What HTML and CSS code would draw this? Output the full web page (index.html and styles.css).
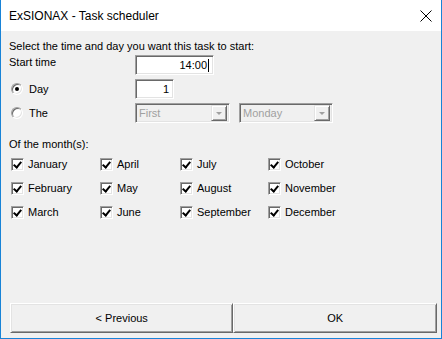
FILE: index.html
```html
<!DOCTYPE html>
<html lang="en">
  <head>
    <meta charset="UTF-8" />
    <title>ExSIONAX - Task scheduler</title>
    <link rel="stylesheet" href="styles.css">
  </head>
  <body>
    <div class="window">
      <div class="titlebar">
        <span class="title">ExSIONAX - Task scheduler</span>
        <svg class="close" width="12" height="12" viewBox="0 0 12 12">
          <path d="M0.5 0.5 L11.5 11.5 M11.5 0.5 L0.5 11.5" stroke="#000" stroke-width="1" fill="none" />
        </svg>
      </div>
      <div class="content">
        <p class="intro">Select the time and day you want this task to start:</p>
        <div class="row start">
          <span class="label">Start time</span>
          <div class="textbox time">14:00<span class="caret"></span></div>
        </div>
        <div class="row">
          <label class="radio-label"><span class="radio checked"></span>Day</label>
          <div class="textbox day">1</div>
        </div>
        <div class="row">
          <label class="radio-label"><span class="radio"></span>The</label>
          <div class="combo first"><span class="combo-text">First</span><span class="drop"></span></div>
          <div class="combo weekday"><span class="combo-text">Monday</span><span class="drop"></span></div>
        </div>
        <p class="months-title">Of the month(s):</p>
        <div class="months">
          <label class="check"><span class="box"></span>January</label>
          <label class="check"><span class="box"></span>April</label>
          <label class="check"><span class="box"></span>July</label>
          <label class="check"><span class="box"></span>October</label>
          <label class="check"><span class="box"></span>February</label>
          <label class="check"><span class="box"></span>May</label>
          <label class="check"><span class="box"></span>August</label>
          <label class="check"><span class="box"></span>November</label>
          <label class="check"><span class="box"></span>March</label>
          <label class="check"><span class="box"></span>June</label>
          <label class="check"><span class="box"></span>September</label>
          <label class="check"><span class="box"></span>December</label>
        </div>
        <div class="buttons">
          <button class="btn prev">&lt; Previous</button>
          <button class="btn ok">OK</button>
        </div>
      </div>
    </div>
  </body>
</html>
```

FILE: styles.css
```css
body{
    margin: 0;
    padding: 0;
    font-family: 'Liberation Sans', Arial, sans-serif;
    font-size: 11px;
    color: #000;
}
.window{
    width: 442px;
    height: 339px;
    box-sizing: border-box;
    border: 1px solid #1883d7;
    border-top: none;
    background-color: #f0f0f0;
    display: flex;
    flex-direction: column;
}
.titlebar{
    height: 31px;
    background-color: #fff;
    display: flex;
    align-items: center;
    justify-content: space-between;
    padding: 0 9px 0 8px;
}
.title{
    font-size: 12px;
    margin-top: 1px;
}
.close{
    margin-top: 1px;
}
.content{
    flex: 1;
    padding: 8px 4px 0 8px;
    display: flex;
    flex-direction: column;
}
.intro{
    margin: 0;
    line-height: 14px;
}
.row{
    display: flex;
    align-items: center;
    height: 20px;
    margin-top: 4px;
}
.start{
    margin-top: 2px;
    align-items: flex-start;
}
.label{
    width: 126px;
    line-height: 14px;
}
.radio-label{
    width: 126px;
    display: flex;
    align-items: center;
}
.radio{
    width: 12px;
    height: 12px;
    box-sizing: border-box;
    border-radius: 50%;
    border: 1px solid;
    border-color: #a0a0a0 #fff #fff #a0a0a0;
    box-shadow: inset 1px 1px 0 #696969, inset -1px -1px 0 #e3e3e3;
    background-color: #fff;
    margin: 0 6px 0 2px;
    position: relative;
}
.checked::after{
    content: "";
    position: absolute;
    left: 3px;
    top: 3px;
    width: 4px;
    height: 4px;
    border-radius: 50%;
    background-color: #000;
}
.textbox{
    height: 20px;
    box-sizing: border-box;
    background-color: #fff;
    border: 1px solid;
    border-color: #a0a0a0 #fff #fff #a0a0a0;
    box-shadow: inset 1px 1px 0 #696969, inset -1px -1px 0 #e3e3e3;
    display: flex;
    align-items: center;
    justify-content: flex-end;
}
.time{
    width: 79px;
    padding-right: 4px;
}
.caret{
    width: 1px;
    height: 13px;
    background-color: #000;
    margin-left: 1px;
}
.day{
    width: 39px;
    padding-right: 4px;
}
.combo{
    height: 20px;
    box-sizing: border-box;
    background-color: #f0f0f0;
    border: 1px solid;
    border-color: #a0a0a0 #fff #fff #a0a0a0;
    box-shadow: inset 1px 1px 0 #696969, inset -1px -1px 0 #e3e3e3;
    display: flex;
    align-items: center;
    justify-content: space-between;
    padding: 2px;
    color: #a0a0a0;
}
.combo-text{
    padding-left: 1px;
}
.first{
    width: 95px;
}
.weekday{
    width: 94px;
    margin-left: 9px;
}
.drop{
    width: 16px;
    height: 16px;
    box-sizing: border-box;
    background-color: #f0f0f0;
    border: 1px solid;
    border-color: #e3e3e3 #696969 #696969 #e3e3e3;
    box-shadow: inset 1px 1px 0 #fff, inset -1px -1px 0 #a0a0a0;
    position: relative;
}
.drop::after{
    content: "";
    position: absolute;
    left: 4px;
    top: 6px;
    border-left: 3px solid transparent;
    border-right: 3px solid transparent;
    border-top: 3px solid #a0a0a0;
}
.months-title{
    margin: 14px 0 0;
    line-height: 14px;
}
.months{
    display: grid;
    grid-template-columns: 89px 80px 88px auto;
    grid-auto-rows: 24px;
    margin-top: 7px;
    padding-left: 2px;
}
.check{
    display: flex;
    align-items: flex-start;
    line-height: 13px;
}
.box{
    width: 13px;
    height: 13px;
    box-sizing: border-box;
    background-color: #fff;
    border: 1px solid;
    border-color: #a0a0a0 #fff #fff #a0a0a0;
    box-shadow: inset 1px 1px 0 #696969, inset -1px -1px 0 #e3e3e3;
    margin-right: 4px;
    position: relative;
}
.box::after{
    content: "";
    position: absolute;
    left: 3px;
    top: 1px;
    width: 3px;
    height: 6px;
    border: solid #000;
    border-width: 0 2px 2px 0;
    transform: rotate(40deg);
}
.buttons{
    margin-top: auto;
    margin-bottom: 5px;
    display: flex;
    margin-left: 1px;
}
.btn{
    height: 30px;
    box-sizing: border-box;
    font-family: 'Liberation Sans', Arial, sans-serif;
    font-size: 11px;
    background-color: #f0f0f0;
    border: 1px solid;
    border-color: #fff #696969 #696969 #fff;
    box-shadow: inset 1px 1px 0 #e3e3e3, inset -1px -1px 0 #a0a0a0;
    padding: 0;
    color: #000;
}
.prev{
    width: 224px;
}
.ok{
    width: 204px;
}
```
